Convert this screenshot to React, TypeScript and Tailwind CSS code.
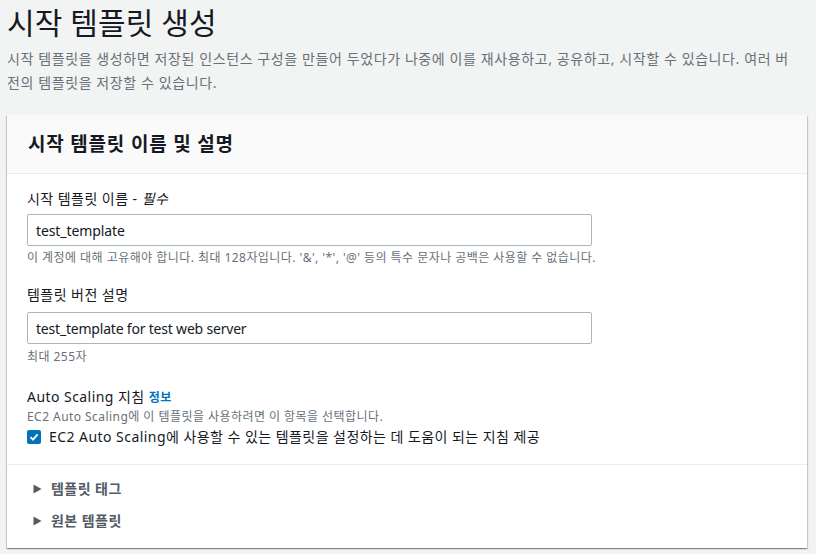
import React from 'react';

export default function App() {
  return (
    <div
      className="w-full min-h-screen bg-[#f2f3f3] text-[#16191f] px-[7px] pt-[2px] pb-2 tracking-[0.45px]"
      style={{ fontFamily: '"Noto Sans", "Noto Sans CJK KR", sans-serif' }}
    >
      <h1 className="text-[30px] leading-[42px] font-normal tracking-[0.1px]">시작 템플릿 생성</h1>
      <p className="text-[14px] leading-[24px] text-[#687078] mt-[3px] w-[790px] tracking-[0.6px]">
        시작 템플릿을 생성하면 저장된 인스턴스 구성을 만들어 두었다가 나중에 이를 재사용하고, 공유하고, 시작할 수 있습니다. 여러 버전의 템플릿을 저장할 수 있습니다.
      </p>

      <div className="mt-[20px] bg-white w-[800px] shadow-[0_1px_1px_0_rgba(0,28,36,0.3),1px_1px_1px_0_rgba(0,28,36,0.15),-1px_1px_1px_0_rgba(0,28,36,0.15)]">
        <div className="bg-[#fafafa] border-b border-[#eaeded] h-[59px] flex items-center px-[21px]">
          <h2 className="text-[19px] font-bold leading-[24px] tracking-[0.8px]">시작 템플릿 이름 및 설명</h2>
        </div>

        <div className="px-[20px] pt-[14px] pb-[16px] border-b border-[#eaeded]">
          <div className="text-[14px] leading-[22px]">
            시작 템플릿 이름 - <i>필수</i>
          </div>
          <div className="mt-[4px] w-[565px] h-[32px] border border-[#aab7b8] rounded-[2px] flex items-center px-[8px] text-[14px] tracking-[-0.1px]">
            test_template
          </div>
          <div className="text-[12px] leading-[18px] text-[#687078] mt-[3px]">
            이 계정에 대해 고유해야 합니다. 최대 128자입니다. '&amp;', '*', '@' 등의 특수 문자나 공백은 사용할 수 없습니다.
          </div>

          <div className="text-[14px] leading-[22px] mt-[17px]">템플릿 버전 설명</div>
          <div className="mt-[6px] w-[565px] h-[32px] border border-[#aab7b8] rounded-[2px] flex items-center px-[8px] text-[14px] tracking-[-0.2px]">
            test_template for test web server
          </div>
          <div className="text-[12px] leading-[18px] text-[#687078] mt-[4px]">최대 255자</div>

          <div className="text-[14px] leading-[22px] mt-[20px]">
            Auto Scaling 지침 <span className="text-[12px] font-bold text-[#0073bb]">정보</span>
          </div>
          <div className="text-[12px] leading-[16px] text-[#687078]">
            EC2 Auto Scaling에 이 템플릿을 사용하려면 이 항목을 선택합니다.
          </div>
          <label className="flex items-center gap-[8px] mt-[1px] text-[14px] leading-[22px]">
            <span className="w-[14px] h-[14px] bg-[#0073bb] rounded-[2px] flex items-center justify-center">
              <svg width="10" height="10" viewBox="0 0 10 10">
                <path d="M1.5 5.2 L4 7.6 L8.6 2.4" stroke="white" strokeWidth="1.8" fill="none" />
              </svg>
            </span>
            EC2 Auto Scaling에 사용할 수 있는 템플릿을 설정하는 데 도움이 되는 지침 제공
          </label>
        </div>

        <div className="px-[26px] pt-[13px] pb-[16px] flex flex-col gap-[10px]">
          {['템플릿 태그', '원본 템플릿'].map((t) => (
            <div key={t} className="flex items-center gap-[9px] text-[14px] leading-[22px] font-bold text-[#545b64]">
              <svg width="9" height="10" viewBox="0 0 9 10">
                <path d="M0.5 0.5 L8.5 5 L0.5 9.5 Z" fill="#545b64" />
              </svg>
              {t}
            </div>
          ))}
        </div>
      </div>
    </div>
  );
}
